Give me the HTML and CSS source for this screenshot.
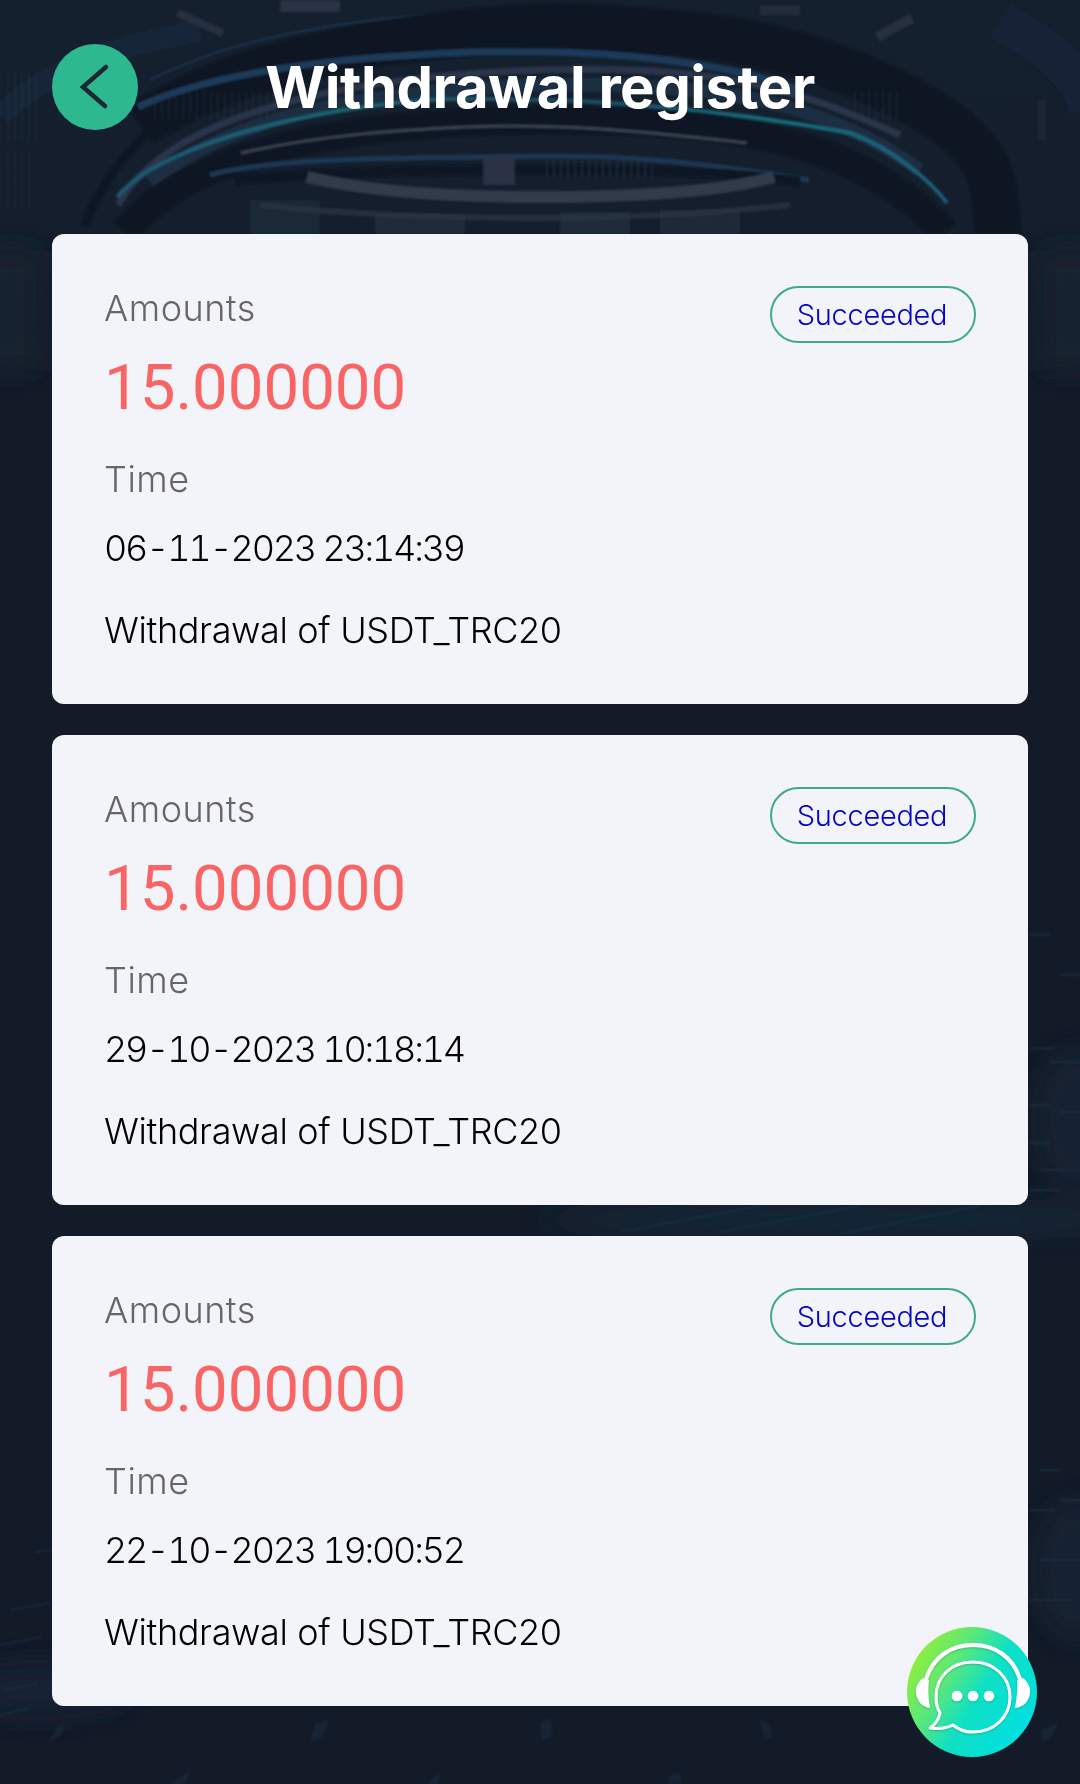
FILE: index.html
```html
<!DOCTYPE html>
<html lang="en">
<head>
<meta charset="utf-8">
<title>Withdrawal register</title>
<link rel="stylesheet" href="styles.css">
</head>
<body>
<svg class="backdrop" viewBox="0 0 1080 1784" aria-hidden="true">
  <defs>
    <filter id="soft"><feGaussianBlur stdDeviation="0.9"/></filter>
    <filter id="softer"><feGaussianBlur stdDeviation="14"/></filter>
    <linearGradient id="teal" x1="0" x2="1" y1="0" y2="0">
      <stop offset="0" stop-color="#1b5a76"/><stop offset=".25" stop-color="#1a6272"/><stop offset=".55" stop-color="#1c4a63"/><stop offset=".8" stop-color="#176f7e"/><stop offset="1" stop-color="#1b5a76"/>
    </linearGradient>
    <linearGradient id="topfade" x1="0" x2="0" y1="0" y2="1">
      <stop offset="0" stop-color="#15202e"/><stop offset=".6" stop-color="#141e2d"/><stop offset="1" stop-color="#131a28"/>
    </linearGradient>
    <pattern id="fins" width="7" height="10" patternUnits="userSpaceOnUse">
      <path d="M1 0V10" stroke="#2b3647" stroke-width="2"/>
    </pattern>
  </defs>
  <rect width="1080" height="1784" fill="#131a28"/>
  <rect width="1080" height="415" fill="url(#topfade)"/>
  <g filter="url(#softer)">
    <rect x="-20" y="250" width="60" height="120" fill="#14222f"/>
    <rect x="1040" y="250" width="60" height="120" fill="#14222f"/>
    <ellipse cx="840" cy="1220" rx="300" ry="14" fill="#16293b"/>
    <ellipse cx="40" cy="1690" rx="90" ry="26" fill="#152434"/>
    <ellipse cx="1075" cy="1120" rx="40" ry="70" fill="#142232"/>
    <ellipse cx="1075" cy="1570" rx="40" ry="70" fill="#142232"/>
  </g>
  <g filter="url(#soft)" fill="none">
    <path d="M0 115C60 60 130 45 200 30" stroke="#182739" stroke-width="22"/>
    <path d="M1000 20C1050 50 1080 70 1090 110" stroke="#162435" stroke-width="40"/>
    <path d="M85 225C130 95 320 12 540 8S950 70 1012 240" stroke="#0f1522" stroke-width="8"/>
    <path d="M150 80C250 28 400 12 540 10S780 16 885 66" stroke="#1c3550" stroke-width="2"/>
    <path d="M140 125C240 60 390 34 540 30S790 40 900 95 990 190 1000 240" stroke="#0f1623" stroke-width="46"/>
    <path d="M138 107C200 78 300 62 400 56S480 52 540 52 720 60 800 90" stroke="#1d3a5a" stroke-width="7"/>
    <path d="M118 205C170 110 360 76 540 70S800 90 900 135" stroke="#2a3648" stroke-width="7"/>
    <path d="M150 182C230 118 360 90 540 85S830 105 920 170" stroke="#1c2d42" stroke-width="14"/>
    <path d="M117 197C150 157 241 127 345 110S500 100 540 100 712 107 850 133C890 147 930 180 947 203" stroke="url(#teal)" stroke-width="4"/>
    <path d="M125 232C190 150 350 122 540 120S860 140 945 232" stroke="#0f1622" stroke-width="28"/>
    <path d="M241 153C320 135 400 130 465 127S600 126 747 143" stroke="#39434f" stroke-width="3"/>
    <path d="M210 175C270 158 400 158 483 157S640 152 809 180" stroke="#1d3853" stroke-width="5"/>
    <path d="M235 180C330 172 420 170 540 170S730 172 800 182" stroke="#0e1422" stroke-width="10"/>
    <path d="M307 177C370 192 450 197 538 197S720 192 774 177" stroke="#303b4c" stroke-width="12"/>
    <path d="M260 205C340 214 450 218 540 218S700 214 790 205" stroke="#252e3e" stroke-width="6"/>
  </g>
  <g filter="url(#soft)" opacity=".6">
    <rect x="150" y="92" width="130" height="28" fill="url(#fins)" opacity=".55"/>
    <rect x="545" y="160" width="110" height="18" fill="url(#fins)"/>
    <rect x="1" y="70" width="40" height="70" fill="url(#fins)" opacity=".5"/>
    <rect x="1" y="150" width="30" height="60" fill="url(#fins)" opacity=".5"/>
    <rect x="850" y="90" width="50" height="30" fill="url(#fins)" opacity=".5"/>
  </g>
  <g filter="url(#soft)" fill="#2b3545">
    <rect x="483" y="155" width="32" height="30" opacity=".9"/>
    <rect x="250" y="200" width="70" height="34" opacity=".4"/>
    <rect x="375" y="214" width="90" height="20" opacity=".5"/>
    <rect x="560" y="212" width="70" height="22" opacity=".5"/>
    <rect x="660" y="210" width="80" height="24" opacity=".45"/>
    <rect x="280" y="0" width="60" height="12" opacity=".9"/>
    <rect x="175" y="19" width="50" height="8" opacity=".8" transform="rotate(24 200 23)"/>
    <rect x="875" y="25" width="40" height="10" opacity=".8" transform="rotate(-28 890 30)"/>
    <rect x="760" y="5" width="40" height="10" opacity=".6"/>
    <rect x="1038" y="100" width="8" height="40" opacity=".35"/>
  </g>
  <g fill="#1a3044" opacity=".45" filter="url(#soft)">
    <path d="M57 1728 65 1720 62 1735 47 1743Z"/>
    <path d="M315 1723 330 1720 322 1738 310 1742Z"/>
    <path d="M540 1722 550 1718 553 1735 542 1742Z"/>
    <path d="M760 1720 770 1726 772 1738 765 1740Z"/>
    <path d="M180 1776 190 1772 186 1784 170 1784Z"/>
    <path d="M430 1780 440 1772 438 1784 428 1784Z"/>
    <path d="M670 1775 680 1772 682 1784 668 1784Z"/>
    <path d="M1040 1730 1060 1722 1050 1738 1042 1742Z"/>
  </g>
  <g stroke="#1b3145" stroke-width="2" filter="url(#soft)" fill="none" opacity=".7">
    <path d="M1030 935H1050M1060 975H1080M1030 1048H1056M1050 1062H1080M1030 1105H1050M1060 1112H1080M1030 1143H1050M1040 1170H1080M1030 1190H1060"/>
    <path d="M1040 1470H1060M1060 1500H1080M1030 1510H1055M1040 1560H1080M1030 1600H1070"/>
    <path d="M35 1552 52 1550M10 1610 50 1603M0 1645 42 1637M5 1690 38 1684M0 1715 30 1708"/>
    <path d="M620 1232 760 1206M720 1232 860 1206M840 1234 980 1206"/>
  </g>
</svg>
<main class="page">
  <header class="topbar">
    <button class="back" type="button" aria-label="Back">
      <svg viewBox="0 0 86 86" class="back-icon"><path d="M54 23 31 43 53 62"/></svg>
    </button>
    <h1 class="title">Withdrawal register</h1>
  </header>
  <section class="list">
    <article class="card">
      <div class="card-top">
        <div>
          <div class="label">Amounts</div>
          <div class="amount">15.000000</div>
        </div>
        <span class="status">Succeeded</span>
      </div>
      <div class="label label-time">Time</div>
      <div class="value value-date">06-11-2023 23:14:39</div>
      <div class="value value-desc">Withdrawal of USDT_TRC20</div>
    </article>
    <article class="card">
      <div class="card-top">
        <div>
          <div class="label">Amounts</div>
          <div class="amount">15.000000</div>
        </div>
        <span class="status">Succeeded</span>
      </div>
      <div class="label label-time">Time</div>
      <div class="value value-date">29-10-2023 10:18:14</div>
      <div class="value value-desc">Withdrawal of USDT_TRC20</div>
    </article>
    <article class="card">
      <div class="card-top">
        <div>
          <div class="label">Amounts</div>
          <div class="amount">15.000000</div>
        </div>
        <span class="status">Succeeded</span>
      </div>
      <div class="label label-time">Time</div>
      <div class="value value-date">22-10-2023 19:00:52</div>
      <div class="value value-desc">Withdrawal of USDT_TRC20</div>
    </article>
  </section>
</main>
<button class="chat" type="button" aria-label="Support chat">
  <svg viewBox="0 0 130 130" class="chat-icon">
    <defs>
      <linearGradient id="chatfill" x1="0" y1="0.2" x2="1" y2="0.8">
        <stop offset="0" stop-color="#9cf02e"/><stop offset=".3" stop-color="#5ce878"/><stop offset=".55" stop-color="#0fe0c4"/><stop offset="1" stop-color="#00dfe6"/>
      </linearGradient>
      <filter id="lift" x="-10%" y="-10%" width="120%" height="120%">
        <feDropShadow dx="0" dy="1" stdDeviation=".8" flood-color="#067a70" flood-opacity=".4"/>
      </filter>
    </defs>
    <circle cx="65" cy="65" r="65" fill="url(#chatfill)"/>
    <g filter="url(#lift)">
      <path d="M19 52C26 30 44 18 66 18S106 30 113 52" fill="none" stroke="#fff" stroke-width="4"/>
      <path d="M16 51C12 54 8 60 9 66 10 74 15 80 23 81 21 70 21 60 22 53Z" fill="#fff"/>
      <path d="M116 51C120 54 124 60 123 66 122 74 117 80 108 81 110 70 111 60 110 53Z" fill="#fff"/>
      <path d="M66 35C44 35 29 50 29 70 29 76 30 81 33 86 32 92 29 97 23 101 31 102 40 101 46 98 52 103 58 105 66 105 87 105 103 90 103 70 103 50 87 35 66 35Z" fill="none" stroke="#fff" stroke-width="3" stroke-linejoin="round"/>
      <circle cx="50" cy="69" r="5.3" fill="#fff"/><circle cx="66" cy="69" r="5.3" fill="#fff"/><circle cx="82" cy="69" r="5.3" fill="#fff"/>
    </g>
  </svg>
</button>
</body>
</html>
```
FILE: styles.css
```css
* { box-sizing: border-box; }
html, body { margin: 0; padding: 0; }
body {
  width: 1080px;
  height: 1784px;
  position: relative;
  overflow: hidden;
  background: #131a28;
  font-family: "Inter", "Noto Sans", sans-serif;
}
.backdrop { position: absolute; inset: 0; width: 1080px; height: 1784px; display: block; }
.page { position: relative; padding: 44px 52px 0; }
.topbar {
  display: grid;
  grid-template-columns: 86px 1fr 86px;
  align-items: center;
  height: 86px;
  margin-bottom: 104px;
}
.back {
  width: 86px; height: 86px; padding: 0; border: 0;
  border-radius: 50%; background: #2eb88f;
}
.back-icon { display: block; width: 86px; height: 86px; }
.back-icon path { fill: none; stroke: #1a2833; stroke-width: 4.5; stroke-linecap: round; stroke-linejoin: miter; }
.title {
  margin: 0;
  grid-column: 2;
  text-align: center;
  color: #fff;
  font-family: "Inter", sans-serif;
  font-size: 58px;
  line-height: 72px;
  font-weight: 700;
  letter-spacing: -0.5px;
}
.list { display: flex; flex-direction: column; gap: 31px; }
.card {
  height: 470px;
  padding: 51px 52px 0;
  border-radius: 12px;
  background: #f3f4f9;
}
.card-top { display: flex; justify-content: space-between; align-items: flex-start; }
.label { color: #666; font-size: 36px; line-height: 46px; font-weight: 350; letter-spacing: 0.5px; }
.amount { margin-top: 17px; color: #f96464; font-family: Roboto, sans-serif; font-size: 63.5px; line-height: 80px; }
.status {
  width: 206px; height: 57px; margin-top: 1px; padding-right: 2px;
  display: flex; align-items: center; justify-content: center;
  border: 2px solid #3fab8a; border-radius: 29px;
  color: #0505c8; font-size: 29px; font-weight: 350; letter-spacing: -0.3px;
}
.label-time { margin-top: 28px; }
.value { color: #000; font-size: 36px; line-height: 46px; font-weight: 350; }
.value-date { margin-top: 23px; font-variant-numeric: tabular-nums; letter-spacing: -2.2px; }
.value-desc { margin-top: 36px; letter-spacing: -0.35px; }
.chat {
  position: fixed; left: 907px; top: 1627px;
  width: 130px; height: 130px; padding: 0; border: 0; background: none;
}
.chat-icon { display: block; width: 130px; height: 130px; }
```
